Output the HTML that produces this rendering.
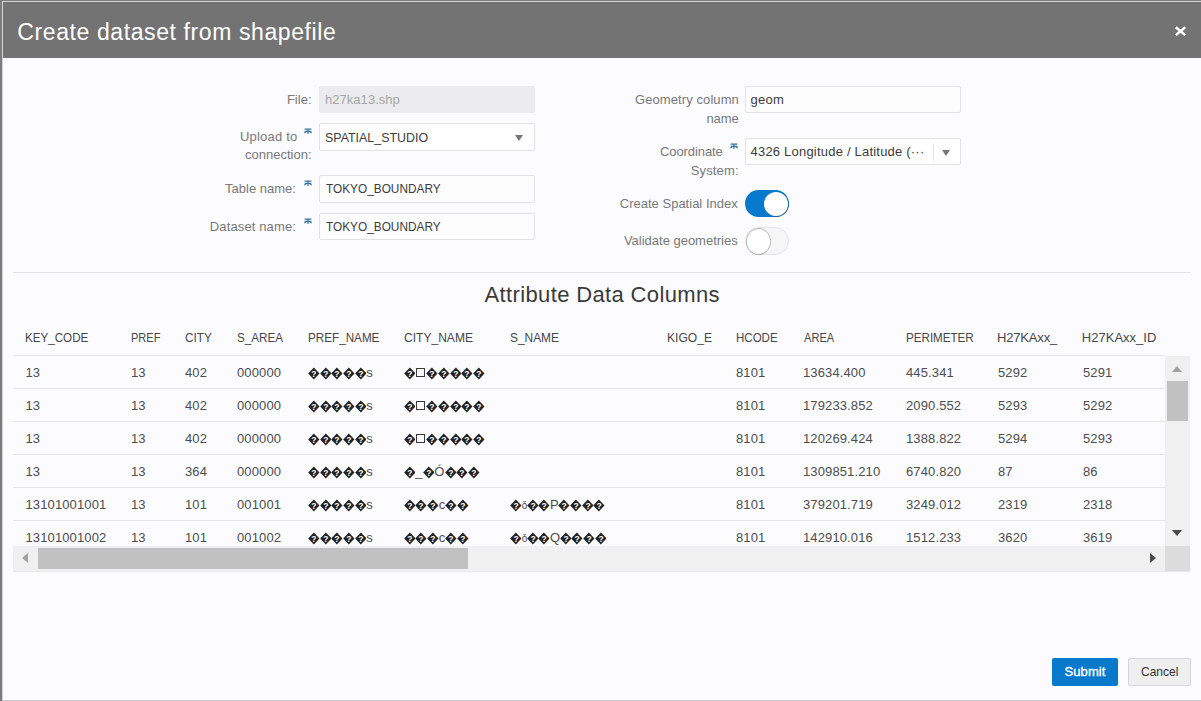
<!DOCTYPE html>
<html><head><meta charset="utf-8">
<style>
*{box-sizing:border-box;margin:0;padding:0}
html,body{width:1201px;height:701px;overflow:hidden;background:#7c7c7c;font-family:"Liberation Sans",sans-serif;position:relative}
.a{position:absolute}
.t{position:absolute;white-space:nowrap}
.td{font-size:13px;line-height:13px;color:#4d4d4d;letter-spacing:0.12px}
.dia{display:inline-block;vertical-align:-3px;margin:0}
.box{display:inline-block;width:9px;height:9.5px;border:1.2px solid #3a3a3a;margin:0 1.3px 0 0.7px;vertical-align:-0.5px}
.inp{position:absolute;background:#fdfdfe;border:1px solid #e2e2e4;border-radius:2px}
.hl{position:absolute;height:1px;background:#e6e6e8}
.tri{position:absolute;width:0;height:0}
</style></head><body>
<!-- frame -->
<div class="a" style="left:2px;top:1px;width:1199px;height:699px;background:#d2d2d2"></div>
<div class="a" style="left:3px;top:2px;width:1198px;height:697px;background:#fcfcfe"></div>
<div class="a" style="left:3px;top:699px;width:1198px;height:1px;background:#fefefe"></div>
<div class="a" style="left:2px;top:700px;width:1199px;height:1px;background:#c9c9cc"></div>
<!-- header -->
<div class="a" style="left:3px;top:2px;width:1198px;height:56px;background:#737373"></div>
<svg class="a" style="left:1174px;top:25.5px" width="13" height="11" viewBox="0 0 13 11"><path d="M1.8 1.2L11.2 9.1M11.2 1.2L1.8 9.1" stroke="#fff" stroke-width="2.5" stroke-linecap="butt"/></svg>
<!-- form inputs -->
<div class="inp" style="left:319px;top:86px;width:216px;height:27px;background:#ececee;border-color:#ececee"></div>
<div class="inp" style="left:319px;top:123px;width:216px;height:28px;background:#fff"></div>
<div class="tri" style="left:515px;top:134.5px;border-left:4.5px solid transparent;border-right:4.5px solid transparent;border-top:6.5px solid #777"></div>
<div class="inp" style="left:319px;top:175px;width:216px;height:28px"></div>
<div class="inp" style="left:319px;top:213px;width:216px;height:27px"></div>
<div class="inp" style="left:745px;top:86px;width:216px;height:27px"></div>
<div class="inp" style="left:745px;top:138px;width:216px;height:27px;background:#fff"></div>
<div class="a" style="left:933px;top:143px;width:1px;height:18px;background:#e4e4e6"></div>
<div class="tri" style="left:941.5px;top:150px;border-left:4.5px solid transparent;border-right:4.5px solid transparent;border-top:6px solid #777"></div>
<!-- asterisks -->
<svg class="a" style="left:303.5px;top:127.5px" width="8" height="7" viewBox="0 0 8 7"><path d="M0.6 1.2L7.4 1.2M0.7 3.3L7.3 3.3M4 1.2L4 6M0.4 5L2.6 3.3M7.6 5L5.4 3.3" stroke="#34729a" stroke-width="1.2" fill="none"/></svg>
<svg class="a" style="left:303.5px;top:179.5px" width="8" height="7" viewBox="0 0 8 7"><path d="M0.6 1.2L7.4 1.2M0.7 3.3L7.3 3.3M4 1.2L4 6M0.4 5L2.6 3.3M7.6 5L5.4 3.3" stroke="#34729a" stroke-width="1.2" fill="none"/></svg>
<svg class="a" style="left:303.5px;top:217.5px" width="8" height="7" viewBox="0 0 8 7"><path d="M0.6 1.2L7.4 1.2M0.7 3.3L7.3 3.3M4 1.2L4 6M0.4 5L2.6 3.3M7.6 5L5.4 3.3" stroke="#34729a" stroke-width="1.2" fill="none"/></svg>
<svg class="a" style="left:730px;top:142.5px" width="8" height="7" viewBox="0 0 8 7"><path d="M0.6 1.2L7.4 1.2M0.7 3.3L7.3 3.3M4 1.2L4 6M0.4 5L2.6 3.3M7.6 5L5.4 3.3" stroke="#34729a" stroke-width="1.2" fill="none"/></svg>


<!-- toggles -->
<div class="a" style="left:745px;top:190px;width:44px;height:27px;border-radius:14px;background:#0679cc"></div>
<div class="a" style="left:763.5px;top:191.5px;width:24.5px;height:24.5px;border-radius:50%;background:#fff;box-shadow:0.4px 0.6px 0 0.4px #24629a"></div>
<div class="a" style="left:745px;top:227px;width:44px;height:28px;border-radius:14px;background:#f6f6f7;border:1px solid #e4e4e6"></div>
<div class="a" style="left:746px;top:228px;width:25px;height:26.5px;border-radius:50%;background:#fff;border:1.3px solid #bdbdbd;border-bottom-color:#a9a9a9"></div>
<!-- separator -->
<div class="hl" style="left:13px;top:272px;width:1178px;background:#e3e3e5"></div>
<!-- table -->

<div class="hl" style="left:13px;top:355px;width:1152px"></div>
<div class="hl" style="left:13px;top:388px;width:1152px"></div>
<div class="hl" style="left:13px;top:421px;width:1152px"></div>
<div class="hl" style="left:13px;top:454px;width:1152px"></div>
<div class="hl" style="left:13px;top:487px;width:1152px"></div>
<div class="hl" style="left:13px;top:520px;width:1152px"></div>
<!-- v scrollbar -->
<div class="a" style="left:1165px;top:356px;width:25px;height:190px;background:#f0f0f1"></div>
<div class="a" style="left:1167px;top:381px;width:21px;height:40px;background:#c1c1c1"></div>
<div class="tri" style="left:1172px;top:366px;border-left:5.6px solid transparent;border-right:5.6px solid transparent;border-bottom:6px solid #a3a3a3"></div>
<div class="tri" style="left:1172px;top:530px;border-left:5.6px solid transparent;border-right:5.6px solid transparent;border-top:6px solid #4a4a4a"></div>
<!-- h scrollbar -->
<div class="a" style="left:13px;top:546px;width:1152px;height:25px;background:#f0f0f1"></div>
<div class="a" style="left:13px;top:571px;width:1177px;height:1px;background:#e7e7e9"></div>
<div class="a" style="left:38px;top:548px;width:430px;height:21px;background:#c1c1c1"></div>
<div class="tri" style="left:22px;top:553px;border-top:5.5px solid transparent;border-bottom:5.5px solid transparent;border-right:6.5px solid #a3a3a3"></div>
<div class="tri" style="left:1150px;top:553px;border-top:5.6px solid transparent;border-bottom:5.6px solid transparent;border-left:6.2px solid #4a4a4a"></div>
<div class="a" style="left:1165px;top:546px;width:25px;height:25px;background:#dcdcdd"></div>
<!-- buttons -->
<div class="a" style="left:1052px;top:658px;width:66px;height:28px;background:#0679cc;border-radius:2px"></div>
<div class="a" style="left:1128px;top:658px;width:63px;height:28px;background:#efefef;border:1px solid #d6d6d6;border-radius:2px"></div>
<div class="t" style="left:17.30px;top:20.53px;font-size:23px;line-height:23px;color:#fff;font-weight:normal;letter-spacing:0.599px;">Create dataset from shapefile</div>
<div class="t" style="left:286.90px;top:92.59px;font-size:13px;line-height:13px;color:#787878;font-weight:normal;letter-spacing:0.038px;">File:</div>
<div class="t" style="left:240.00px;top:129.59px;font-size:13px;line-height:13px;color:#787878;font-weight:normal;letter-spacing:0.198px;">Upload to</div>
<div class="t" style="left:244.90px;top:148.39px;font-size:13px;line-height:13px;color:#787878;font-weight:normal;letter-spacing:0.022px;">connection:</div>
<div class="t" style="left:225.10px;top:181.99px;font-size:13px;line-height:13px;color:#787878;font-weight:normal;letter-spacing:-0.001px;">Table name:</div>
<div class="t" style="left:209.80px;top:219.99px;font-size:13px;line-height:13px;color:#787878;font-weight:normal;letter-spacing:0.131px;">Dataset name:</div>
<div class="t" style="left:635.00px;top:92.59px;font-size:13px;line-height:13px;color:#787878;font-weight:normal;letter-spacing:0.089px;">Geometry column</div>
<div class="t" style="left:706.40px;top:111.89px;font-size:13px;line-height:13px;color:#787878;font-weight:normal;letter-spacing:-0.030px;">name</div>
<div class="t" style="left:660.00px;top:144.69px;font-size:13px;line-height:13px;color:#787878;font-weight:normal;letter-spacing:-0.085px;">Coordinate</div>
<div class="t" style="left:690.70px;top:163.99px;font-size:13px;line-height:13px;color:#787878;font-weight:normal;letter-spacing:0.143px;">System:</div>
<div class="t" style="left:619.80px;top:197.19px;font-size:13px;line-height:13px;color:#787878;font-weight:normal;letter-spacing:0.006px;">Create Spatial Index</div>
<div class="t" style="left:623.90px;top:233.59px;font-size:13px;line-height:13px;color:#787878;font-weight:normal;letter-spacing:-0.007px;">Validate geometries</div>
<div class="t" style="left:325.00px;top:92.99px;font-size:13px;line-height:13px;color:#a6a6a6;font-weight:normal;letter-spacing:0.038px;">h27ka13.shp</div>
<div class="t" style="left:324.60px;top:130.69px;font-size:13px;line-height:13px;color:#3c3c3c;font-weight:normal;letter-spacing:0.000px;transform:scaleX(0.9558);transform-origin:0 0;">SPATIAL_STUDIO</div>
<div class="t" style="left:325.50px;top:181.99px;font-size:13px;line-height:13px;color:#3c3c3c;font-weight:normal;letter-spacing:0.000px;transform:scaleX(0.9099);transform-origin:0 0;">TOKYO_BOUNDARY</div>
<div class="t" style="left:325.50px;top:219.69px;font-size:13px;line-height:13px;color:#3c3c3c;font-weight:normal;letter-spacing:0.000px;transform:scaleX(0.9099);transform-origin:0 0;">TOKYO_BOUNDARY</div>
<div class="t" style="left:750.50px;top:92.99px;font-size:13px;line-height:13px;color:#3c3c3c;font-weight:normal;letter-spacing:0.270px;">geom</div>
<div class="t" style="left:750.50px;top:144.59px;font-size:13px;line-height:13px;color:#3c3c3c;font-weight:normal;letter-spacing:0.209px;">4326 Longitude / Latitude (···</div>
<div class="t" style="left:484.60px;top:284.07px;font-size:22px;line-height:22px;color:#3a3a3a;font-weight:normal;letter-spacing:0.356px;">Attribute Data Columns</div>
<div class="t" style="left:25.11px;top:330.69px;font-size:13px;line-height:13px;color:#474747;font-weight:normal;letter-spacing:0.000px;transform:scaleX(0.8940);transform-origin:0 0;">KEY_CODE</div>
<div class="t" style="left:130.85px;top:330.69px;font-size:13px;line-height:13px;color:#474747;font-weight:normal;letter-spacing:0.000px;transform:scaleX(0.8479);transform-origin:0 0;">PREF</div>
<div class="t" style="left:185.00px;top:330.69px;font-size:13px;line-height:13px;color:#474747;font-weight:normal;letter-spacing:0.000px;transform:scaleX(0.9018);transform-origin:0 0;">CITY</div>
<div class="t" style="left:237.40px;top:330.69px;font-size:13px;line-height:13px;color:#474747;font-weight:normal;letter-spacing:0.000px;transform:scaleX(0.8948);transform-origin:0 0;">S_AREA</div>
<div class="t" style="left:307.80px;top:330.69px;font-size:13px;line-height:13px;color:#474747;font-weight:normal;letter-spacing:0.000px;transform:scaleX(0.8986);transform-origin:0 0;">PREF_NAME</div>
<div class="t" style="left:403.70px;top:330.69px;font-size:13px;line-height:13px;color:#474747;font-weight:normal;letter-spacing:0.000px;transform:scaleX(0.9273);transform-origin:0 0;">CITY_NAME</div>
<div class="t" style="left:509.50px;top:330.69px;font-size:13px;line-height:13px;color:#474747;font-weight:normal;letter-spacing:0.000px;transform:scaleX(0.9147);transform-origin:0 0;">S_NAME</div>
<div class="t" style="left:666.77px;top:330.69px;font-size:13px;line-height:13px;color:#474747;font-weight:normal;letter-spacing:0.000px;transform:scaleX(0.9280);transform-origin:0 0;">KIGO_E</div>
<div class="t" style="left:736.11px;top:330.69px;font-size:13px;line-height:13px;color:#474747;font-weight:normal;letter-spacing:0.000px;transform:scaleX(0.8860);transform-origin:0 0;">HCODE</div>
<div class="t" style="left:803.70px;top:330.69px;font-size:13px;line-height:13px;color:#474747;font-weight:normal;letter-spacing:0.000px;transform:scaleX(0.8536);transform-origin:0 0;">AREA</div>
<div class="t" style="left:905.51px;top:330.69px;font-size:13px;line-height:13px;color:#474747;font-weight:normal;letter-spacing:0.000px;transform:scaleX(0.8932);transform-origin:0 0;">PERIMETER</div>
<div class="t" style="left:997.00px;top:330.69px;font-size:13px;line-height:13px;color:#474747;font-weight:normal;letter-spacing:-0.170px;">H27KAxx_</div>
<div class="t" style="left:1081.80px;top:330.69px;font-size:13px;line-height:13px;color:#474747;font-weight:normal;letter-spacing:0.019px;">H27KAxx_ID</div>
<div class="t" style="left:1064.50px;top:664.59px;font-size:13px;line-height:13px;color:#fff;font-weight:normal;letter-spacing:0.090px;-webkit-text-stroke:0.35px #fff;">Submit</div>
<div class="t" style="left:1140.50px;top:664.59px;font-size:13px;line-height:13px;color:#333;font-weight:normal;letter-spacing:0.000px;transform:scaleX(0.9241);transform-origin:0 0;">Cancel</div>
<div class="t td" style="left:25.50px;top:365.79px;">13</div>
<div class="t td" style="left:131.00px;top:365.79px;">13</div>
<div class="t td" style="left:185.00px;top:365.79px;">402</div>
<div class="t td" style="left:237.00px;top:365.79px;">000000</div>
<div class="t td" style="left:308.00px;top:365.79px;"><svg class="dia" width="11.66" height="13" viewBox="0 0 11.66 13"><path d="M5.83 0.4L11.5 6.4L5.83 12.4L0.16 6.4Z" fill="#222"/><text x="5.9" y="9.6" font-size="8.5" font-weight="bold" fill="#fff" text-anchor="middle" font-family="Liberation Sans">?</text></svg><svg class="dia" width="11.66" height="13" viewBox="0 0 11.66 13"><path d="M5.83 0.4L11.5 6.4L5.83 12.4L0.16 6.4Z" fill="#222"/><text x="5.9" y="9.6" font-size="8.5" font-weight="bold" fill="#fff" text-anchor="middle" font-family="Liberation Sans">?</text></svg><svg class="dia" width="11.66" height="13" viewBox="0 0 11.66 13"><path d="M5.83 0.4L11.5 6.4L5.83 12.4L0.16 6.4Z" fill="#222"/><text x="5.9" y="9.6" font-size="8.5" font-weight="bold" fill="#fff" text-anchor="middle" font-family="Liberation Sans">?</text></svg><svg class="dia" width="11.66" height="13" viewBox="0 0 11.66 13"><path d="M5.83 0.4L11.5 6.4L5.83 12.4L0.16 6.4Z" fill="#222"/><text x="5.9" y="9.6" font-size="8.5" font-weight="bold" fill="#fff" text-anchor="middle" font-family="Liberation Sans">?</text></svg><svg class="dia" width="11.66" height="13" viewBox="0 0 11.66 13"><path d="M5.83 0.4L11.5 6.4L5.83 12.4L0.16 6.4Z" fill="#222"/><text x="5.9" y="9.6" font-size="8.5" font-weight="bold" fill="#fff" text-anchor="middle" font-family="Liberation Sans">?</text></svg>s</div>
<div class="t td" style="left:403.70px;top:365.79px;"><svg class="dia" width="11.66" height="13" viewBox="0 0 11.66 13"><path d="M5.83 0.4L11.5 6.4L5.83 12.4L0.16 6.4Z" fill="#222"/><text x="5.9" y="9.6" font-size="8.5" font-weight="bold" fill="#fff" text-anchor="middle" font-family="Liberation Sans">?</text></svg><span class="box"></span><svg class="dia" width="11.66" height="13" viewBox="0 0 11.66 13"><path d="M5.83 0.4L11.5 6.4L5.83 12.4L0.16 6.4Z" fill="#222"/><text x="5.9" y="9.6" font-size="8.5" font-weight="bold" fill="#fff" text-anchor="middle" font-family="Liberation Sans">?</text></svg><svg class="dia" width="11.66" height="13" viewBox="0 0 11.66 13"><path d="M5.83 0.4L11.5 6.4L5.83 12.4L0.16 6.4Z" fill="#222"/><text x="5.9" y="9.6" font-size="8.5" font-weight="bold" fill="#fff" text-anchor="middle" font-family="Liberation Sans">?</text></svg><svg class="dia" width="11.66" height="13" viewBox="0 0 11.66 13"><path d="M5.83 0.4L11.5 6.4L5.83 12.4L0.16 6.4Z" fill="#222"/><text x="5.9" y="9.6" font-size="8.5" font-weight="bold" fill="#fff" text-anchor="middle" font-family="Liberation Sans">?</text></svg><svg class="dia" width="11.66" height="13" viewBox="0 0 11.66 13"><path d="M5.83 0.4L11.5 6.4L5.83 12.4L0.16 6.4Z" fill="#222"/><text x="5.9" y="9.6" font-size="8.5" font-weight="bold" fill="#fff" text-anchor="middle" font-family="Liberation Sans">?</text></svg><svg class="dia" width="11.66" height="13" viewBox="0 0 11.66 13"><path d="M5.83 0.4L11.5 6.4L5.83 12.4L0.16 6.4Z" fill="#222"/><text x="5.9" y="9.6" font-size="8.5" font-weight="bold" fill="#fff" text-anchor="middle" font-family="Liberation Sans">?</text></svg></div>
<div class="t td" style="left:736.00px;top:365.79px;">8101</div>
<div class="t td" style="left:803.00px;top:365.79px;">13634.400</div>
<div class="t td" style="left:906.00px;top:365.79px;">445.341</div>
<div class="t td" style="left:998.00px;top:365.79px;">5292</div>
<div class="t td" style="left:1083.00px;top:365.79px;">5291</div>
<div class="t td" style="left:25.50px;top:398.79px;">13</div>
<div class="t td" style="left:131.00px;top:398.79px;">13</div>
<div class="t td" style="left:185.00px;top:398.79px;">402</div>
<div class="t td" style="left:237.00px;top:398.79px;">000000</div>
<div class="t td" style="left:308.00px;top:398.79px;"><svg class="dia" width="11.66" height="13" viewBox="0 0 11.66 13"><path d="M5.83 0.4L11.5 6.4L5.83 12.4L0.16 6.4Z" fill="#222"/><text x="5.9" y="9.6" font-size="8.5" font-weight="bold" fill="#fff" text-anchor="middle" font-family="Liberation Sans">?</text></svg><svg class="dia" width="11.66" height="13" viewBox="0 0 11.66 13"><path d="M5.83 0.4L11.5 6.4L5.83 12.4L0.16 6.4Z" fill="#222"/><text x="5.9" y="9.6" font-size="8.5" font-weight="bold" fill="#fff" text-anchor="middle" font-family="Liberation Sans">?</text></svg><svg class="dia" width="11.66" height="13" viewBox="0 0 11.66 13"><path d="M5.83 0.4L11.5 6.4L5.83 12.4L0.16 6.4Z" fill="#222"/><text x="5.9" y="9.6" font-size="8.5" font-weight="bold" fill="#fff" text-anchor="middle" font-family="Liberation Sans">?</text></svg><svg class="dia" width="11.66" height="13" viewBox="0 0 11.66 13"><path d="M5.83 0.4L11.5 6.4L5.83 12.4L0.16 6.4Z" fill="#222"/><text x="5.9" y="9.6" font-size="8.5" font-weight="bold" fill="#fff" text-anchor="middle" font-family="Liberation Sans">?</text></svg><svg class="dia" width="11.66" height="13" viewBox="0 0 11.66 13"><path d="M5.83 0.4L11.5 6.4L5.83 12.4L0.16 6.4Z" fill="#222"/><text x="5.9" y="9.6" font-size="8.5" font-weight="bold" fill="#fff" text-anchor="middle" font-family="Liberation Sans">?</text></svg>s</div>
<div class="t td" style="left:403.70px;top:398.79px;"><svg class="dia" width="11.66" height="13" viewBox="0 0 11.66 13"><path d="M5.83 0.4L11.5 6.4L5.83 12.4L0.16 6.4Z" fill="#222"/><text x="5.9" y="9.6" font-size="8.5" font-weight="bold" fill="#fff" text-anchor="middle" font-family="Liberation Sans">?</text></svg><span class="box"></span><svg class="dia" width="11.66" height="13" viewBox="0 0 11.66 13"><path d="M5.83 0.4L11.5 6.4L5.83 12.4L0.16 6.4Z" fill="#222"/><text x="5.9" y="9.6" font-size="8.5" font-weight="bold" fill="#fff" text-anchor="middle" font-family="Liberation Sans">?</text></svg><svg class="dia" width="11.66" height="13" viewBox="0 0 11.66 13"><path d="M5.83 0.4L11.5 6.4L5.83 12.4L0.16 6.4Z" fill="#222"/><text x="5.9" y="9.6" font-size="8.5" font-weight="bold" fill="#fff" text-anchor="middle" font-family="Liberation Sans">?</text></svg><svg class="dia" width="11.66" height="13" viewBox="0 0 11.66 13"><path d="M5.83 0.4L11.5 6.4L5.83 12.4L0.16 6.4Z" fill="#222"/><text x="5.9" y="9.6" font-size="8.5" font-weight="bold" fill="#fff" text-anchor="middle" font-family="Liberation Sans">?</text></svg><svg class="dia" width="11.66" height="13" viewBox="0 0 11.66 13"><path d="M5.83 0.4L11.5 6.4L5.83 12.4L0.16 6.4Z" fill="#222"/><text x="5.9" y="9.6" font-size="8.5" font-weight="bold" fill="#fff" text-anchor="middle" font-family="Liberation Sans">?</text></svg><svg class="dia" width="11.66" height="13" viewBox="0 0 11.66 13"><path d="M5.83 0.4L11.5 6.4L5.83 12.4L0.16 6.4Z" fill="#222"/><text x="5.9" y="9.6" font-size="8.5" font-weight="bold" fill="#fff" text-anchor="middle" font-family="Liberation Sans">?</text></svg></div>
<div class="t td" style="left:736.00px;top:398.79px;">8101</div>
<div class="t td" style="left:803.00px;top:398.79px;">179233.852</div>
<div class="t td" style="left:906.00px;top:398.79px;">2090.552</div>
<div class="t td" style="left:998.00px;top:398.79px;">5293</div>
<div class="t td" style="left:1083.00px;top:398.79px;">5292</div>
<div class="t td" style="left:25.50px;top:431.79px;">13</div>
<div class="t td" style="left:131.00px;top:431.79px;">13</div>
<div class="t td" style="left:185.00px;top:431.79px;">402</div>
<div class="t td" style="left:237.00px;top:431.79px;">000000</div>
<div class="t td" style="left:308.00px;top:431.79px;"><svg class="dia" width="11.66" height="13" viewBox="0 0 11.66 13"><path d="M5.83 0.4L11.5 6.4L5.83 12.4L0.16 6.4Z" fill="#222"/><text x="5.9" y="9.6" font-size="8.5" font-weight="bold" fill="#fff" text-anchor="middle" font-family="Liberation Sans">?</text></svg><svg class="dia" width="11.66" height="13" viewBox="0 0 11.66 13"><path d="M5.83 0.4L11.5 6.4L5.83 12.4L0.16 6.4Z" fill="#222"/><text x="5.9" y="9.6" font-size="8.5" font-weight="bold" fill="#fff" text-anchor="middle" font-family="Liberation Sans">?</text></svg><svg class="dia" width="11.66" height="13" viewBox="0 0 11.66 13"><path d="M5.83 0.4L11.5 6.4L5.83 12.4L0.16 6.4Z" fill="#222"/><text x="5.9" y="9.6" font-size="8.5" font-weight="bold" fill="#fff" text-anchor="middle" font-family="Liberation Sans">?</text></svg><svg class="dia" width="11.66" height="13" viewBox="0 0 11.66 13"><path d="M5.83 0.4L11.5 6.4L5.83 12.4L0.16 6.4Z" fill="#222"/><text x="5.9" y="9.6" font-size="8.5" font-weight="bold" fill="#fff" text-anchor="middle" font-family="Liberation Sans">?</text></svg><svg class="dia" width="11.66" height="13" viewBox="0 0 11.66 13"><path d="M5.83 0.4L11.5 6.4L5.83 12.4L0.16 6.4Z" fill="#222"/><text x="5.9" y="9.6" font-size="8.5" font-weight="bold" fill="#fff" text-anchor="middle" font-family="Liberation Sans">?</text></svg>s</div>
<div class="t td" style="left:403.70px;top:431.79px;"><svg class="dia" width="11.66" height="13" viewBox="0 0 11.66 13"><path d="M5.83 0.4L11.5 6.4L5.83 12.4L0.16 6.4Z" fill="#222"/><text x="5.9" y="9.6" font-size="8.5" font-weight="bold" fill="#fff" text-anchor="middle" font-family="Liberation Sans">?</text></svg><span class="box"></span><svg class="dia" width="11.66" height="13" viewBox="0 0 11.66 13"><path d="M5.83 0.4L11.5 6.4L5.83 12.4L0.16 6.4Z" fill="#222"/><text x="5.9" y="9.6" font-size="8.5" font-weight="bold" fill="#fff" text-anchor="middle" font-family="Liberation Sans">?</text></svg><svg class="dia" width="11.66" height="13" viewBox="0 0 11.66 13"><path d="M5.83 0.4L11.5 6.4L5.83 12.4L0.16 6.4Z" fill="#222"/><text x="5.9" y="9.6" font-size="8.5" font-weight="bold" fill="#fff" text-anchor="middle" font-family="Liberation Sans">?</text></svg><svg class="dia" width="11.66" height="13" viewBox="0 0 11.66 13"><path d="M5.83 0.4L11.5 6.4L5.83 12.4L0.16 6.4Z" fill="#222"/><text x="5.9" y="9.6" font-size="8.5" font-weight="bold" fill="#fff" text-anchor="middle" font-family="Liberation Sans">?</text></svg><svg class="dia" width="11.66" height="13" viewBox="0 0 11.66 13"><path d="M5.83 0.4L11.5 6.4L5.83 12.4L0.16 6.4Z" fill="#222"/><text x="5.9" y="9.6" font-size="8.5" font-weight="bold" fill="#fff" text-anchor="middle" font-family="Liberation Sans">?</text></svg><svg class="dia" width="11.66" height="13" viewBox="0 0 11.66 13"><path d="M5.83 0.4L11.5 6.4L5.83 12.4L0.16 6.4Z" fill="#222"/><text x="5.9" y="9.6" font-size="8.5" font-weight="bold" fill="#fff" text-anchor="middle" font-family="Liberation Sans">?</text></svg></div>
<div class="t td" style="left:736.00px;top:431.79px;">8101</div>
<div class="t td" style="left:803.00px;top:431.79px;">120269.424</div>
<div class="t td" style="left:906.00px;top:431.79px;">1388.822</div>
<div class="t td" style="left:998.00px;top:431.79px;">5294</div>
<div class="t td" style="left:1083.00px;top:431.79px;">5293</div>
<div class="t td" style="left:25.50px;top:464.79px;">13</div>
<div class="t td" style="left:131.00px;top:464.79px;">13</div>
<div class="t td" style="left:185.00px;top:464.79px;">364</div>
<div class="t td" style="left:237.00px;top:464.79px;">000000</div>
<div class="t td" style="left:308.00px;top:464.79px;"><svg class="dia" width="11.66" height="13" viewBox="0 0 11.66 13"><path d="M5.83 0.4L11.5 6.4L5.83 12.4L0.16 6.4Z" fill="#222"/><text x="5.9" y="9.6" font-size="8.5" font-weight="bold" fill="#fff" text-anchor="middle" font-family="Liberation Sans">?</text></svg><svg class="dia" width="11.66" height="13" viewBox="0 0 11.66 13"><path d="M5.83 0.4L11.5 6.4L5.83 12.4L0.16 6.4Z" fill="#222"/><text x="5.9" y="9.6" font-size="8.5" font-weight="bold" fill="#fff" text-anchor="middle" font-family="Liberation Sans">?</text></svg><svg class="dia" width="11.66" height="13" viewBox="0 0 11.66 13"><path d="M5.83 0.4L11.5 6.4L5.83 12.4L0.16 6.4Z" fill="#222"/><text x="5.9" y="9.6" font-size="8.5" font-weight="bold" fill="#fff" text-anchor="middle" font-family="Liberation Sans">?</text></svg><svg class="dia" width="11.66" height="13" viewBox="0 0 11.66 13"><path d="M5.83 0.4L11.5 6.4L5.83 12.4L0.16 6.4Z" fill="#222"/><text x="5.9" y="9.6" font-size="8.5" font-weight="bold" fill="#fff" text-anchor="middle" font-family="Liberation Sans">?</text></svg><svg class="dia" width="11.66" height="13" viewBox="0 0 11.66 13"><path d="M5.83 0.4L11.5 6.4L5.83 12.4L0.16 6.4Z" fill="#222"/><text x="5.9" y="9.6" font-size="8.5" font-weight="bold" fill="#fff" text-anchor="middle" font-family="Liberation Sans">?</text></svg>s</div>
<div class="t td" style="left:403.70px;top:464.79px;"><svg class="dia" width="11.66" height="13" viewBox="0 0 11.66 13"><path d="M5.83 0.4L11.5 6.4L5.83 12.4L0.16 6.4Z" fill="#222"/><text x="5.9" y="9.6" font-size="8.5" font-weight="bold" fill="#fff" text-anchor="middle" font-family="Liberation Sans">?</text></svg>_<svg class="dia" width="11.66" height="13" viewBox="0 0 11.66 13"><path d="M5.83 0.4L11.5 6.4L5.83 12.4L0.16 6.4Z" fill="#222"/><text x="5.9" y="9.6" font-size="8.5" font-weight="bold" fill="#fff" text-anchor="middle" font-family="Liberation Sans">?</text></svg>Ó<svg class="dia" width="11.66" height="13" viewBox="0 0 11.66 13"><path d="M5.83 0.4L11.5 6.4L5.83 12.4L0.16 6.4Z" fill="#222"/><text x="5.9" y="9.6" font-size="8.5" font-weight="bold" fill="#fff" text-anchor="middle" font-family="Liberation Sans">?</text></svg><svg class="dia" width="11.66" height="13" viewBox="0 0 11.66 13"><path d="M5.83 0.4L11.5 6.4L5.83 12.4L0.16 6.4Z" fill="#222"/><text x="5.9" y="9.6" font-size="8.5" font-weight="bold" fill="#fff" text-anchor="middle" font-family="Liberation Sans">?</text></svg><svg class="dia" width="11.66" height="13" viewBox="0 0 11.66 13"><path d="M5.83 0.4L11.5 6.4L5.83 12.4L0.16 6.4Z" fill="#222"/><text x="5.9" y="9.6" font-size="8.5" font-weight="bold" fill="#fff" text-anchor="middle" font-family="Liberation Sans">?</text></svg></div>
<div class="t td" style="left:736.00px;top:464.79px;">8101</div>
<div class="t td" style="left:803.00px;top:464.79px;">1309851.210</div>
<div class="t td" style="left:906.00px;top:464.79px;">6740.820</div>
<div class="t td" style="left:998.00px;top:464.79px;">87</div>
<div class="t td" style="left:1083.00px;top:464.79px;">86</div>
<div class="t td" style="left:25.50px;top:497.79px;">13101001001</div>
<div class="t td" style="left:131.00px;top:497.79px;">13</div>
<div class="t td" style="left:185.00px;top:497.79px;">101</div>
<div class="t td" style="left:237.00px;top:497.79px;">001001</div>
<div class="t td" style="left:308.00px;top:497.79px;"><svg class="dia" width="11.66" height="13" viewBox="0 0 11.66 13"><path d="M5.83 0.4L11.5 6.4L5.83 12.4L0.16 6.4Z" fill="#222"/><text x="5.9" y="9.6" font-size="8.5" font-weight="bold" fill="#fff" text-anchor="middle" font-family="Liberation Sans">?</text></svg><svg class="dia" width="11.66" height="13" viewBox="0 0 11.66 13"><path d="M5.83 0.4L11.5 6.4L5.83 12.4L0.16 6.4Z" fill="#222"/><text x="5.9" y="9.6" font-size="8.5" font-weight="bold" fill="#fff" text-anchor="middle" font-family="Liberation Sans">?</text></svg><svg class="dia" width="11.66" height="13" viewBox="0 0 11.66 13"><path d="M5.83 0.4L11.5 6.4L5.83 12.4L0.16 6.4Z" fill="#222"/><text x="5.9" y="9.6" font-size="8.5" font-weight="bold" fill="#fff" text-anchor="middle" font-family="Liberation Sans">?</text></svg><svg class="dia" width="11.66" height="13" viewBox="0 0 11.66 13"><path d="M5.83 0.4L11.5 6.4L5.83 12.4L0.16 6.4Z" fill="#222"/><text x="5.9" y="9.6" font-size="8.5" font-weight="bold" fill="#fff" text-anchor="middle" font-family="Liberation Sans">?</text></svg><svg class="dia" width="11.66" height="13" viewBox="0 0 11.66 13"><path d="M5.83 0.4L11.5 6.4L5.83 12.4L0.16 6.4Z" fill="#222"/><text x="5.9" y="9.6" font-size="8.5" font-weight="bold" fill="#fff" text-anchor="middle" font-family="Liberation Sans">?</text></svg>s</div>
<div class="t td" style="left:403.70px;top:497.79px;"><svg class="dia" width="11.66" height="13" viewBox="0 0 11.66 13"><path d="M5.83 0.4L11.5 6.4L5.83 12.4L0.16 6.4Z" fill="#222"/><text x="5.9" y="9.6" font-size="8.5" font-weight="bold" fill="#fff" text-anchor="middle" font-family="Liberation Sans">?</text></svg><svg class="dia" width="11.66" height="13" viewBox="0 0 11.66 13"><path d="M5.83 0.4L11.5 6.4L5.83 12.4L0.16 6.4Z" fill="#222"/><text x="5.9" y="9.6" font-size="8.5" font-weight="bold" fill="#fff" text-anchor="middle" font-family="Liberation Sans">?</text></svg><svg class="dia" width="11.66" height="13" viewBox="0 0 11.66 13"><path d="M5.83 0.4L11.5 6.4L5.83 12.4L0.16 6.4Z" fill="#222"/><text x="5.9" y="9.6" font-size="8.5" font-weight="bold" fill="#fff" text-anchor="middle" font-family="Liberation Sans">?</text></svg>c<svg class="dia" width="11.66" height="13" viewBox="0 0 11.66 13"><path d="M5.83 0.4L11.5 6.4L5.83 12.4L0.16 6.4Z" fill="#222"/><text x="5.9" y="9.6" font-size="8.5" font-weight="bold" fill="#fff" text-anchor="middle" font-family="Liberation Sans">?</text></svg><svg class="dia" width="11.66" height="13" viewBox="0 0 11.66 13"><path d="M5.83 0.4L11.5 6.4L5.83 12.4L0.16 6.4Z" fill="#222"/><text x="5.9" y="9.6" font-size="8.5" font-weight="bold" fill="#fff" text-anchor="middle" font-family="Liberation Sans">?</text></svg></div>
<div class="t td" style="left:510.00px;top:497.79px;letter-spacing:-0.5px;"><svg class="dia" width="11.66" height="13" viewBox="0 0 11.66 13"><path d="M5.83 0.4L11.5 6.4L5.83 12.4L0.16 6.4Z" fill="#222"/><text x="5.9" y="9.6" font-size="8.5" font-weight="bold" fill="#fff" text-anchor="middle" font-family="Liberation Sans">?</text></svg><span style="font-size:10px">ǒ</span><svg class="dia" width="11.66" height="13" viewBox="0 0 11.66 13"><path d="M5.83 0.4L11.5 6.4L5.83 12.4L0.16 6.4Z" fill="#222"/><text x="5.9" y="9.6" font-size="8.5" font-weight="bold" fill="#fff" text-anchor="middle" font-family="Liberation Sans">?</text></svg><svg class="dia" width="11.66" height="13" viewBox="0 0 11.66 13"><path d="M5.83 0.4L11.5 6.4L5.83 12.4L0.16 6.4Z" fill="#222"/><text x="5.9" y="9.6" font-size="8.5" font-weight="bold" fill="#fff" text-anchor="middle" font-family="Liberation Sans">?</text></svg>P<svg class="dia" width="11.66" height="13" viewBox="0 0 11.66 13"><path d="M5.83 0.4L11.5 6.4L5.83 12.4L0.16 6.4Z" fill="#222"/><text x="5.9" y="9.6" font-size="8.5" font-weight="bold" fill="#fff" text-anchor="middle" font-family="Liberation Sans">?</text></svg><svg class="dia" width="11.66" height="13" viewBox="0 0 11.66 13"><path d="M5.83 0.4L11.5 6.4L5.83 12.4L0.16 6.4Z" fill="#222"/><text x="5.9" y="9.6" font-size="8.5" font-weight="bold" fill="#fff" text-anchor="middle" font-family="Liberation Sans">?</text></svg><svg class="dia" width="11.66" height="13" viewBox="0 0 11.66 13"><path d="M5.83 0.4L11.5 6.4L5.83 12.4L0.16 6.4Z" fill="#222"/><text x="5.9" y="9.6" font-size="8.5" font-weight="bold" fill="#fff" text-anchor="middle" font-family="Liberation Sans">?</text></svg><svg class="dia" width="11.66" height="13" viewBox="0 0 11.66 13"><path d="M5.83 0.4L11.5 6.4L5.83 12.4L0.16 6.4Z" fill="#222"/><text x="5.9" y="9.6" font-size="8.5" font-weight="bold" fill="#fff" text-anchor="middle" font-family="Liberation Sans">?</text></svg></div>
<div class="t td" style="left:736.00px;top:497.79px;">8101</div>
<div class="t td" style="left:803.00px;top:497.79px;">379201.719</div>
<div class="t td" style="left:906.00px;top:497.79px;">3249.012</div>
<div class="t td" style="left:998.00px;top:497.79px;">2319</div>
<div class="t td" style="left:1083.00px;top:497.79px;">2318</div>
<div class="t td" style="left:25.50px;top:530.79px;">13101001002</div>
<div class="t td" style="left:131.00px;top:530.79px;">13</div>
<div class="t td" style="left:185.00px;top:530.79px;">101</div>
<div class="t td" style="left:237.00px;top:530.79px;">001002</div>
<div class="t td" style="left:308.00px;top:530.79px;"><svg class="dia" width="11.66" height="13" viewBox="0 0 11.66 13"><path d="M5.83 0.4L11.5 6.4L5.83 12.4L0.16 6.4Z" fill="#222"/><text x="5.9" y="9.6" font-size="8.5" font-weight="bold" fill="#fff" text-anchor="middle" font-family="Liberation Sans">?</text></svg><svg class="dia" width="11.66" height="13" viewBox="0 0 11.66 13"><path d="M5.83 0.4L11.5 6.4L5.83 12.4L0.16 6.4Z" fill="#222"/><text x="5.9" y="9.6" font-size="8.5" font-weight="bold" fill="#fff" text-anchor="middle" font-family="Liberation Sans">?</text></svg><svg class="dia" width="11.66" height="13" viewBox="0 0 11.66 13"><path d="M5.83 0.4L11.5 6.4L5.83 12.4L0.16 6.4Z" fill="#222"/><text x="5.9" y="9.6" font-size="8.5" font-weight="bold" fill="#fff" text-anchor="middle" font-family="Liberation Sans">?</text></svg><svg class="dia" width="11.66" height="13" viewBox="0 0 11.66 13"><path d="M5.83 0.4L11.5 6.4L5.83 12.4L0.16 6.4Z" fill="#222"/><text x="5.9" y="9.6" font-size="8.5" font-weight="bold" fill="#fff" text-anchor="middle" font-family="Liberation Sans">?</text></svg><svg class="dia" width="11.66" height="13" viewBox="0 0 11.66 13"><path d="M5.83 0.4L11.5 6.4L5.83 12.4L0.16 6.4Z" fill="#222"/><text x="5.9" y="9.6" font-size="8.5" font-weight="bold" fill="#fff" text-anchor="middle" font-family="Liberation Sans">?</text></svg>s</div>
<div class="t td" style="left:403.70px;top:530.79px;"><svg class="dia" width="11.66" height="13" viewBox="0 0 11.66 13"><path d="M5.83 0.4L11.5 6.4L5.83 12.4L0.16 6.4Z" fill="#222"/><text x="5.9" y="9.6" font-size="8.5" font-weight="bold" fill="#fff" text-anchor="middle" font-family="Liberation Sans">?</text></svg><svg class="dia" width="11.66" height="13" viewBox="0 0 11.66 13"><path d="M5.83 0.4L11.5 6.4L5.83 12.4L0.16 6.4Z" fill="#222"/><text x="5.9" y="9.6" font-size="8.5" font-weight="bold" fill="#fff" text-anchor="middle" font-family="Liberation Sans">?</text></svg><svg class="dia" width="11.66" height="13" viewBox="0 0 11.66 13"><path d="M5.83 0.4L11.5 6.4L5.83 12.4L0.16 6.4Z" fill="#222"/><text x="5.9" y="9.6" font-size="8.5" font-weight="bold" fill="#fff" text-anchor="middle" font-family="Liberation Sans">?</text></svg>c<svg class="dia" width="11.66" height="13" viewBox="0 0 11.66 13"><path d="M5.83 0.4L11.5 6.4L5.83 12.4L0.16 6.4Z" fill="#222"/><text x="5.9" y="9.6" font-size="8.5" font-weight="bold" fill="#fff" text-anchor="middle" font-family="Liberation Sans">?</text></svg><svg class="dia" width="11.66" height="13" viewBox="0 0 11.66 13"><path d="M5.83 0.4L11.5 6.4L5.83 12.4L0.16 6.4Z" fill="#222"/><text x="5.9" y="9.6" font-size="8.5" font-weight="bold" fill="#fff" text-anchor="middle" font-family="Liberation Sans">?</text></svg></div>
<div class="t td" style="left:510.00px;top:530.79px;letter-spacing:-0.5px;"><svg class="dia" width="11.66" height="13" viewBox="0 0 11.66 13"><path d="M5.83 0.4L11.5 6.4L5.83 12.4L0.16 6.4Z" fill="#222"/><text x="5.9" y="9.6" font-size="8.5" font-weight="bold" fill="#fff" text-anchor="middle" font-family="Liberation Sans">?</text></svg><span style="font-size:10px">ǒ</span><svg class="dia" width="11.66" height="13" viewBox="0 0 11.66 13"><path d="M5.83 0.4L11.5 6.4L5.83 12.4L0.16 6.4Z" fill="#222"/><text x="5.9" y="9.6" font-size="8.5" font-weight="bold" fill="#fff" text-anchor="middle" font-family="Liberation Sans">?</text></svg><svg class="dia" width="11.66" height="13" viewBox="0 0 11.66 13"><path d="M5.83 0.4L11.5 6.4L5.83 12.4L0.16 6.4Z" fill="#222"/><text x="5.9" y="9.6" font-size="8.5" font-weight="bold" fill="#fff" text-anchor="middle" font-family="Liberation Sans">?</text></svg>Q<svg class="dia" width="11.66" height="13" viewBox="0 0 11.66 13"><path d="M5.83 0.4L11.5 6.4L5.83 12.4L0.16 6.4Z" fill="#222"/><text x="5.9" y="9.6" font-size="8.5" font-weight="bold" fill="#fff" text-anchor="middle" font-family="Liberation Sans">?</text></svg><svg class="dia" width="11.66" height="13" viewBox="0 0 11.66 13"><path d="M5.83 0.4L11.5 6.4L5.83 12.4L0.16 6.4Z" fill="#222"/><text x="5.9" y="9.6" font-size="8.5" font-weight="bold" fill="#fff" text-anchor="middle" font-family="Liberation Sans">?</text></svg><svg class="dia" width="11.66" height="13" viewBox="0 0 11.66 13"><path d="M5.83 0.4L11.5 6.4L5.83 12.4L0.16 6.4Z" fill="#222"/><text x="5.9" y="9.6" font-size="8.5" font-weight="bold" fill="#fff" text-anchor="middle" font-family="Liberation Sans">?</text></svg><svg class="dia" width="11.66" height="13" viewBox="0 0 11.66 13"><path d="M5.83 0.4L11.5 6.4L5.83 12.4L0.16 6.4Z" fill="#222"/><text x="5.9" y="9.6" font-size="8.5" font-weight="bold" fill="#fff" text-anchor="middle" font-family="Liberation Sans">?</text></svg></div>
<div class="t td" style="left:736.00px;top:530.79px;">8101</div>
<div class="t td" style="left:803.00px;top:530.79px;">142910.016</div>
<div class="t td" style="left:906.00px;top:530.79px;">1512.233</div>
<div class="t td" style="left:998.00px;top:530.79px;">3620</div>
<div class="t td" style="left:1083.00px;top:530.79px;">3619</div>
</body></html>
